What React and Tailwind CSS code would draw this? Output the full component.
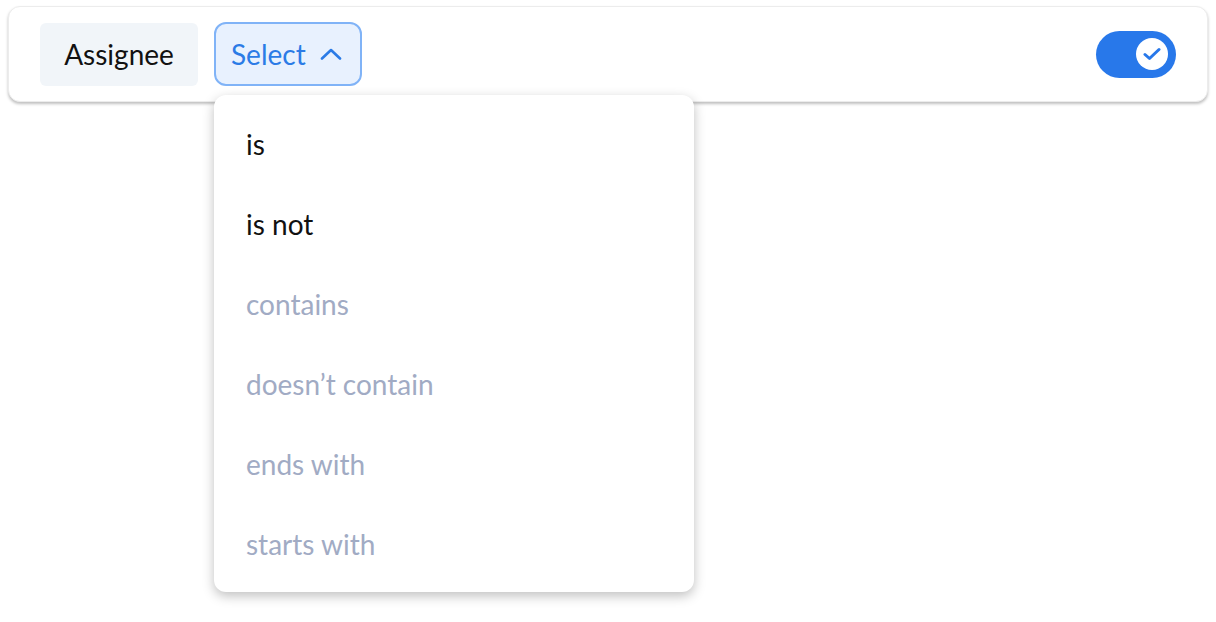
import React from "react";

const items = [
  { label: "is", active: true },
  { label: "is not", active: true },
  { label: "contains", active: false },
  { label: "doesn’t contain", active: false },
  { label: "ends with", active: false },
  { label: "starts with", active: false },
];

export default function App() {
  return (
    <div className="w-[1216px] h-[622px] bg-white relative" style={{ fontFamily: "Lato, 'Open Sans', sans-serif" }}>
      <div className="pt-[6px] px-[8px]">
        <div className="h-[96px] rounded-[12px] border border-[#ececec] bg-white shadow-[0_2px_3px_rgba(0,0,0,0.25)] flex items-center pl-[31px] pr-[31px]">
          <div className="h-[63px] w-[158px] rounded-[6px] bg-[#f1f5f9] flex items-center justify-center text-[28px] text-[#111111]">
            Assignee
          </div>
          <div className="relative ml-[16px]">
            <button className="h-[64px] w-[148px] rounded-[12px] border-2 border-[#80b3f7] bg-[#e8f1fe] flex items-center pl-[15px] text-[28px] text-[#2b7be6]">
              <span>Select</span>
              <svg className="ml-[14px]" width="22" height="12" viewBox="0 0 22 12" fill="none">
                <path d="M2 10.5 L11 2 L20 10.5" stroke="#2b7be6" strokeWidth="2.6" strokeLinecap="round" strokeLinejoin="round" />
              </svg>
            </button>
            <div className="absolute left-0 top-[73px] w-[480px] rounded-[12px] bg-white shadow-[0_4px_12px_rgba(0,0,0,0.25)] pt-[9px] pb-[8px] z-10">
              {items.map((it) => (
                <div
                  key={it.label}
                  className={`h-[80px] flex items-center pl-[32px] text-[28px] ${it.active ? "text-[#111111]" : "text-[#a1abc4]"}`}
                >
                  {it.label}
                </div>
              ))}
            </div>
          </div>
          <div className="ml-auto w-[80px] h-[47px] rounded-full bg-[#2878ea] flex items-center justify-end pr-[8px]">
            <div className="w-[32px] h-[32px] rounded-full bg-white flex items-center justify-center">
              <svg width="18" height="14" viewBox="0 0 18 14" fill="none">
                <path d="M2 7.5 L6.5 11.5 L16 2.5" stroke="#2878ea" strokeWidth="3" strokeLinecap="round" strokeLinejoin="round" />
              </svg>
            </div>
          </div>
        </div>
      </div>
    </div>
  );
}
